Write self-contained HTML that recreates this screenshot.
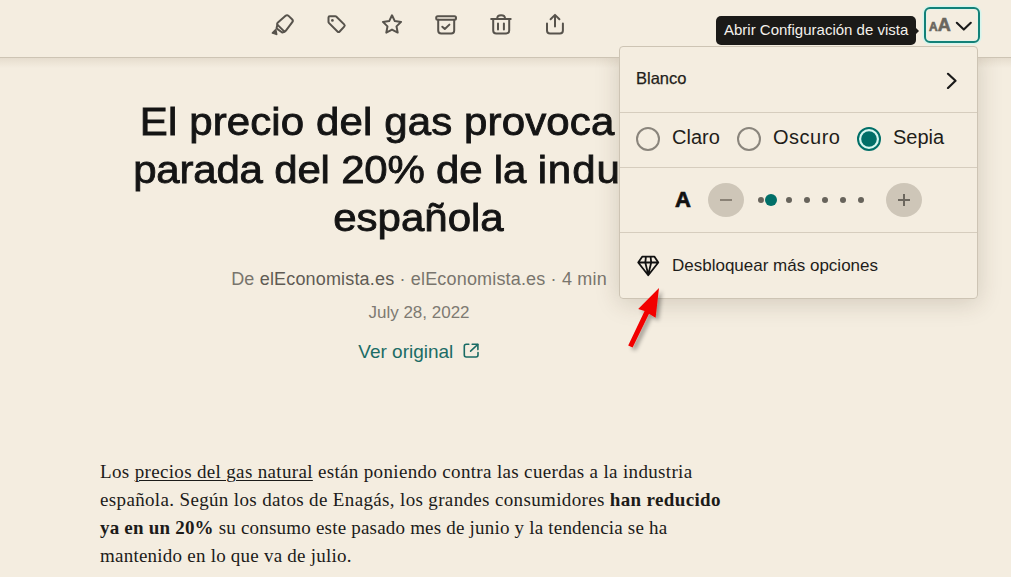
<!DOCTYPE html>
<html><head><meta charset="utf-8">
<style>
html,body{margin:0;padding:0;}
body{width:1011px;height:577px;overflow:hidden;background:#f4ede0;position:relative;font-family:"Liberation Sans",sans-serif;color:#1a1a1a;}
.abs{position:absolute;}
.nw{white-space:nowrap;}
#toolbar{position:absolute;left:0;top:0;width:1011px;height:57px;background:#f4ede0;border-bottom:1px solid #cdc4b4;z-index:3;}
#tbshadow{position:absolute;left:0;top:58px;width:1011px;height:10px;background:linear-gradient(#e6ddce,#f4ede0);z-index:1;}
.ico{position:absolute;top:10px;width:30px;height:30px;}
.ico path,.ico circle,.ico rect,.ico line{fill:none;stroke:#57534c;stroke-width:2;stroke-linecap:round;stroke-linejoin:round;}
.tl{transform:scaleY(0.93);transform-origin:50% 38.56px;position:absolute;left:118.5px;width:600px;text-align:center;font-size:42px;line-height:48px;white-space:nowrap;color:#141414;-webkit-text-stroke:0.9px #141414;}
#byline{position:absolute;left:119px;top:266.5px;letter-spacing:0.17px;width:600px;text-align:center;font-size:18px;line-height:24px;white-space:nowrap;color:#79756d;}
#byline b{font-weight:normal;color:#5f5b54;}
#date{position:absolute;left:119px;width:600px;text-align:center;font-size:17px;line-height:24px;white-space:nowrap;color:#7e7a72;}
#orig{position:absolute;left:119px;width:600px;text-align:center;font-size:19px;line-height:24px;white-space:nowrap;color:#1b6c65;}
#body{position:absolute;left:100px;top:457.9px;font-family:"Liberation Serif",serif;font-size:19px;line-height:28px;color:#1c1b19;}
#body div{white-space:nowrap;}
#body u{text-decoration:underline;text-underline-offset:2px;text-decoration-thickness:1px;}
#pshadow{position:absolute;left:619px;top:46px;width:359px;height:253px;border-radius:4px;box-shadow:0 4px 24px rgba(60,45,20,0.18);z-index:2;}
#panel{position:absolute;left:619px;top:46px;width:357px;height:251px;border:1px solid #cdc4b4;border-radius:4px;background:#f4ede0;z-index:4;}
.div{position:absolute;left:0;width:357px;height:1px;background:#d6cdbe;}
.radio{position:absolute;width:20px;height:20px;border:2px solid #8a857c;border-radius:50%;}
.rlab{position:absolute;font-size:20px;line-height:24px;white-space:nowrap;color:#1f1d1a;}
.circ{position:absolute;width:36px;height:34px;border-radius:50%;background:#cec6b8;}
.dot{position:absolute;width:6px;height:6px;border-radius:50%;background:#67635b;}
#tooltip{position:absolute;left:716px;top:16px;width:200px;height:29px;background:#1b1a18;border-radius:5px;z-index:5;}
#aabtn{position:absolute;left:924px;top:7px;width:52px;height:32px;border:2px solid #128178;border-radius:6px;box-shadow:0 0 0 1.5px #d3f5ed, inset 0 0 0 1px #e6f2e8;z-index:5;}
</style></head><body>
<div id="tbshadow"></div>
<div id="toolbar">
  <!-- highlighter -->
  <svg class="ico" style="left:268px;width:32px" viewBox="0 0 32 30" width="32" height="30">
    <path d="M20.55 5.88 L24.05 9.22 Q25.50 10.60 24.30 12.20 L18.10 20.40 Q16.90 22.00 15.47 20.60 L9.83 15.10 Q8.40 13.70 9.92 12.40 L17.58 5.80 Q19.10 4.50 20.55 5.88 Z"/>
    <path d="M9.3 15.0 L8.5 18.4 L14.2 22.5 L16.6 21.8"/>
    <path d="M4.45 22.75 L7.45 19.75 Q7.80 19.40 7.90 19.89 L8.80 24.11 Q8.90 24.60 8.42 24.45 L4.58 23.25 Q4.10 23.10 4.45 22.75 Z" style="fill:#57534c;stroke-width:1.3"/>
  </svg>
  <!-- tag -->
  <svg class="ico" style="left:322px" viewBox="0 0 30 30" width="30" height="30">
    <path d="M7.80 6.20 L13.30 6.20 Q13.80 6.20 14.16 6.55 L22.16 14.38 Q23.30 15.50 22.20 16.66 L17.70 21.44 Q16.60 22.60 15.47 21.47 L6.85 12.85 Q6.50 12.50 6.50 12.00 L6.50 7.50 Q6.50 6.20 7.80 6.20 Z"/>
    <circle cx="10.4" cy="10.4" r="1.35" style="fill:#57534c;stroke:none"/>
  </svg>
  <!-- star -->
  <svg class="ico" style="left:377px" viewBox="0 0 30 30" width="30" height="30">
    <path d="M15 5.3 L17.8 11.1 L24.1 11.9 L19.5 16.4 L20.7 22.6 L15 19.6 L9.3 22.6 L10.5 16.4 L5.9 11.9 L12.2 11.1 Z"/>
  </svg>
  <!-- archive -->
  <svg class="ico" style="left:431px" viewBox="0 0 30 30" width="30" height="30">
    <rect x="5.2" y="6.2" width="19.8" height="3.5" rx="1.5"/>
    <path d="M7.2 9.7 V20.4 Q7.2 23.4 10.2 23.4 H20.2 Q23.2 23.4 23.2 20.4 V9.7"/>
    <path d="M11.3 16.7 L13.8 19 L18.4 14.6"/>
  </svg>
  <!-- trash -->
  <svg class="ico" style="left:486px" viewBox="0 0 30 30" width="30" height="30">
    <path d="M5.2 9.1 H24.7"/>
    <path d="M11.2 8.6 Q11.2 5.3 15.1 5.3 Q19 5.3 19 8.6"/>
    <path d="M7.2 9.5 V20.4 Q7.2 23.4 10.2 23.4 H20.2 Q23.2 23.4 23.2 20.4 V9.5"/>
    <path d="M12 13.4 V19.6 M17.9 13.4 V19.6"/>
  </svg>
  <!-- share -->
  <svg class="ico" style="left:540px" viewBox="0 0 30 30" width="30" height="30">
    <path d="M15 5 V16.4 M10.6 9.2 L15 4.9 L19.4 9.2"/>
    <path d="M7 13.4 V20.4 Q7 23.4 10 23.4 H19.9 Q22.9 23.4 22.9 20.4 V13.4"/>
  </svg>
</div>

<div id="tooltip">
  <div class="abs nw" style="left:8px;top:5px;font-size:15px;line-height:18px;color:#f4f1ec;">Abrir Configuración de vista</div>
  <svg class="abs" style="left:199px;top:11px" width="5" height="8" viewBox="0 0 5 8"><path d="M0 0 L4 4 L0 8 Z" fill="#1b1a18"/></svg>
</div>
<div id="aabtn">
  <div class="abs nw" style="left:3px;top:6px;font-weight:bold;color:#6a665e;-webkit-text-stroke:0.6px #6a665e;"><span style="font-size:12px">A</span><span style="font-size:18px">A</span></div>
  <svg class="abs" style="left:29px;top:12.4px" width="18" height="11" viewBox="0 0 18 11"><path d="M1.8 1.8 L8.8 8.6 L15.8 1.8" fill="none" stroke="#1a1a1a" stroke-width="2.1" stroke-linecap="round" stroke-linejoin="round"/></svg>
</div>

<div class="tl" style="top:97.4px;letter-spacing:0.12px;margin-left:-0.3px">El precio del gas provoca una</div>
<div class="tl" style="top:145.4px;letter-spacing:-0.2px;margin-left:-2.4px">parada del 20% de la <span style="letter-spacing:0.9px">indu</span><span style="visibility:hidden">stria</span></div>
<div class="tl" style="top:193.4px">española</div>
<div id="byline">De <b>elEconomista.es</b> · elEconomista.es · 4 min</div>
<div id="date" style="top:300.5px">July 28, 2022</div>
<div id="orig" style="top:339.5px">Ver original&nbsp;&nbsp;&nbsp;&nbsp;&nbsp;</div>
<svg class="abs" style="left:463px;top:343px" width="16" height="16" viewBox="0 0 16 16"><g fill="none" stroke="#196b64" stroke-width="1.6" stroke-linecap="round" stroke-linejoin="round"><path d="M5.8 1.3 H3.3 Q1.3 1.3 1.3 3.3 V12 Q1.3 14 3.3 14 H13 Q15 14 15 12 V9.6"/><path d="M9.2 1.3 H14.9 V6.6"/><path d="M14.7 1.5 L7.6 8.2"/></g></svg>

<div id="body">
  <div style="letter-spacing:0.34px">Los <u>precios del gas natural</u> están poniendo contra las cuerdas a la industria</div>
  <div style="letter-spacing:0.35px">española. Según los datos de Enagás, los grandes consumidores <b>han reducido</b></div>
  <div style="letter-spacing:0.2px"><b>ya en un 20%</b> su consumo este pasado mes de junio y la tendencia se ha</div>
  <div style="letter-spacing:0.23px">mantenido en lo que va de julio.</div>
</div>

<div id="pshadow"></div>
<div id="panel">
  <div class="abs nw" style="left:16px;top:21px;font-size:16.5px;line-height:20px;color:#1f1d1a;-webkit-text-stroke:0.25px #1f1d1a;">Blanco</div>
  <svg class="abs" style="left:325px;top:24px" width="14" height="18" viewBox="0 0 14 18"><path d="M3 2.8 L10.5 9.8 L3 17" fill="none" stroke="#1a1a1a" stroke-width="2.2" stroke-linecap="round" stroke-linejoin="round"/></svg>
  <div class="div" style="top:65px"></div>
  <div class="radio" style="left:16px;top:80px"></div>
  <div class="rlab" style="left:52px;top:78px">Claro</div>
  <div class="radio" style="left:117px;top:80px"></div>
  <div class="rlab" style="left:153px;top:78px;letter-spacing:0.5px">Oscuro</div>
  <svg class="abs" style="left:237px;top:80px" width="24" height="24" viewBox="0 0 24 24"><circle cx="12" cy="12" r="11" fill="#d6f7f0" stroke="#006f68" stroke-width="2"/><circle cx="12" cy="12" r="7.8" fill="#006f68"/></svg>
  <div class="rlab" style="left:273px;top:78px">Sepia</div>
  <div class="div" style="top:120px"></div>
  <div class="abs nw" style="left:55px;top:141px;font-size:22px;line-height:24px;font-weight:bold;color:#111;-webkit-text-stroke:0.7px #111;">A</div>
  <div class="circ" style="left:88px;top:136px"></div>
  <div class="abs" style="left:100px;top:152px;width:12px;height:2px;background:#8a8276;"></div>
  <div class="dot" style="left:138px;top:150px"></div>
  <div class="abs" style="left:145px;top:147px;width:12px;height:12px;border-radius:50%;background:#006f68;"></div>
  <div class="dot" style="left:166px;top:150px"></div>
  <div class="dot" style="left:184px;top:150px"></div>
  <div class="dot" style="left:202px;top:150px"></div>
  <div class="dot" style="left:220px;top:150px"></div>
  <div class="dot" style="left:238px;top:150px"></div>
  <div class="circ" style="left:266px;top:136px"></div>
  <div class="abs" style="left:278px;top:152px;width:12px;height:2px;background:#6c675e;"></div>
  <div class="abs" style="left:283px;top:147px;width:2px;height:12px;background:#6c675e;"></div>
  <div class="div" style="top:185px"></div>
  <svg class="abs" style="left:16px;top:205.8px" width="24" height="24" viewBox="0 0 24 24">
    <path d="M6.2 3.7 H18.5 L22.3 9.5 L12.25 22.2 L2.2 9.5 Z M2.4 9.5 H22.1 M9.9 3.9 L9.3 9.5 L12.25 21.6 M14.6 3.9 L15.2 9.5 L12.25 21.6" fill="none" stroke="#111" stroke-width="1.8" stroke-linejoin="round"/>
  </svg>
  <div class="abs nw" style="left:52px;top:209px;font-size:17px;line-height:20px;color:#1f1d1a;">Desbloquear más opciones</div>
</div>

<svg class="abs" style="left:600px;top:270px;z-index:6" width="100" height="100" viewBox="600 270 100 100">
  <defs><filter id="sh" x="-50%" y="-50%" width="200%" height="200%"><feGaussianBlur in="SourceAlpha" stdDeviation="2"/><feOffset dx="3" dy="3"/><feComponentTransfer><feFuncA type="linear" slope="0.35"/></feComponentTransfer><feMerge><feMergeNode/><feMergeNode in="SourceGraphic"/></feMerge></filter></defs>
  <path d="M659 288 L655.6 317.8 L649 313.8 L632.6 347.6 L628.2 345.4 L644.6 311 L638.2 309 Z" fill="#f20000" filter="url(#sh)"/>
</svg>
</body></html>
